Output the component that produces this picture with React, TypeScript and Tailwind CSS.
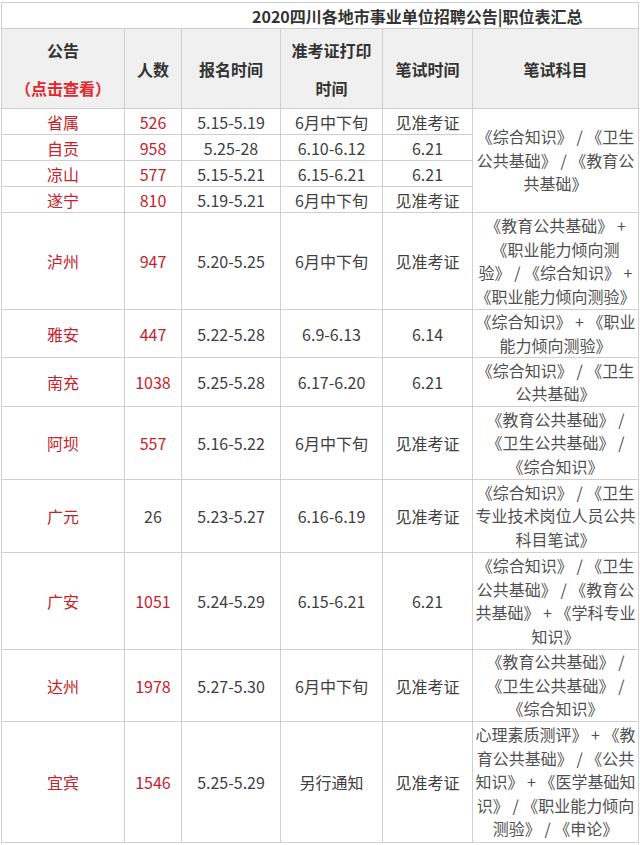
import React from "react";

type Row = {
  city: string;
  num: string;
  numRed?: boolean;
  reg: string;
  print: string;
  exam: string;
  h: number;
  subj?: string[];
  span?: number;
};

const rows: Row[] = [
  { city: "省属", num: "526", numRed: true, reg: "5.15-5.19", print: "6月中下旬", exam: "见准考证", h: 26, subj: ["《综合知识》 / 《卫生", "公共基础》 / 《教育公", "共基础》"], span: 4 },
  { city: "自贡", num: "958", numRed: true, reg: "5.25-28", print: "6.10-6.12", exam: "6.21", h: 26 },
  { city: "凉山", num: "577", numRed: true, reg: "5.15-5.21", print: "6.15-6.21", exam: "6.21", h: 26 },
  { city: "遂宁", num: "810", numRed: true, reg: "5.19-5.21", print: "6月中下旬", exam: "见准考证", h: 26 },
  { city: "泸州", num: "947", numRed: true, reg: "5.20-5.25", print: "6月中下旬", exam: "见准考证", h: 97, subj: ["《教育公共基础》 +", "《职业能力倾向测", "验》 / 《综合知识》 +", "《职业能力倾向测验》"] },
  { city: "雅安", num: "447", numRed: true, reg: "5.22-5.28", print: "6.9-6.13", exam: "6.14", h: 48, subj: ["《综合知识》 + 《职业", "能力倾向测验》"] },
  { city: "南充", num: "1038", numRed: true, reg: "5.25-5.28", print: "6.17-6.20", exam: "6.21", h: 49, subj: ["《综合知识》 / 《卫生", "公共基础》"] },
  { city: "阿坝", num: "557", numRed: true, reg: "5.16-5.22", print: "6月中下旬", exam: "见准考证", h: 73, subj: ["《教育公共基础》 /", "《卫生公共基础》 /", "《综合知识》"] },
  { city: "广元", num: "26", numRed: false, reg: "5.23-5.27", print: "6.16-6.19", exam: "见准考证", h: 73, subj: ["《综合知识》 / 《卫生", "专业技术岗位人员公共", "科目笔试》"] },
  { city: "广安", num: "1051", numRed: true, reg: "5.24-5.29", print: "6.15-6.21", exam: "6.21", h: 97, subj: ["《综合知识》 / 《卫生", "公共基础》 / 《教育公", "共基础》 + 《学科专业", "知识》"] },
  { city: "达州", num: "1978", numRed: true, reg: "5.27-5.30", print: "6月中下旬", exam: "见准考证", h: 72, subj: ["《教育公共基础》 /", "《卫生公共基础》 /", "《综合知识》"] },
  { city: "宜宾", num: "1546", numRed: true, reg: "5.25-5.29", print: "另行通知", exam: "见准考证", h: 121, subj: ["心理素质测评》 + 《教", "育公共基础》 / 《公共", "知识》 + 《医学基础知", "识》 / 《职业能力倾向", "测验》 / 《申论》"] },
];

const cell = "border border-[#cfcfcf] p-0 text-center align-middle";

export default function App() {
  return (
    <div
      className="w-[640px] h-[845px] bg-white overflow-hidden"
      style={{ fontFamily: '"Noto Sans CJK SC", "Microsoft YaHei", "Noto Sans", sans-serif' }}
    >
      <table className="ml-[1px] mt-[2px] w-[637px] table-fixed border-collapse text-[16px] text-[#404040]">
        <colgroup>
          <col className="w-[123px]" />
          <col className="w-[57px]" />
          <col className="w-[99px]" />
          <col className="w-[102px]" />
          <col className="w-[90px]" />
          <col className="w-[166px]" />
        </colgroup>
        <tbody>
          <tr className="h-[26px]">
            <td colSpan={6} className="border border-[#cfcfcf] p-0 pl-[250px] text-left align-middle font-bold text-[#333] leading-[22px]">
              2020四川各地市事业单位招聘公告|职位表汇总
            </td>
          </tr>
          <tr className="h-[80px] bg-[#f0f0f0] font-bold text-[#333] leading-[38px]">
            <td className={cell}>
              <div>公告</div>
              <div className="text-[#e4262c]">（点击查看）</div>
            </td>
            <td className={cell}>人数</td>
            <td className={cell}>报名时间</td>
            <td className={cell}>
              <div>准考证打印</div>
              <div>时间</div>
            </td>
            <td className={cell}>笔试时间</td>
            <td className={cell}>笔试科目</td>
          </tr>
          {rows.map((r) => (
            <tr key={r.city} style={{ height: r.h }} className="leading-[22px]">
              <td className={`${cell} text-[#c5232b]`}>{r.city}</td>
              <td className={`${cell} ${r.numRed ? "text-[#c5232b]" : "text-[#404040]"}`}>{r.num}</td>
              <td className={cell}>{r.reg}</td>
              <td className={cell}>{r.print}</td>
              <td className={cell}>{r.exam}</td>
              {r.subj && (
                <td className={`${cell} text-[#505050] whitespace-nowrap leading-[23.5px]`} rowSpan={r.span ?? 1}>
                  {r.subj.map((l, i) => (
                    <div key={i}>{l}</div>
                  ))}
                </td>
              )}
            </tr>
          ))}
        </tbody>
      </table>
    </div>
  );
}
